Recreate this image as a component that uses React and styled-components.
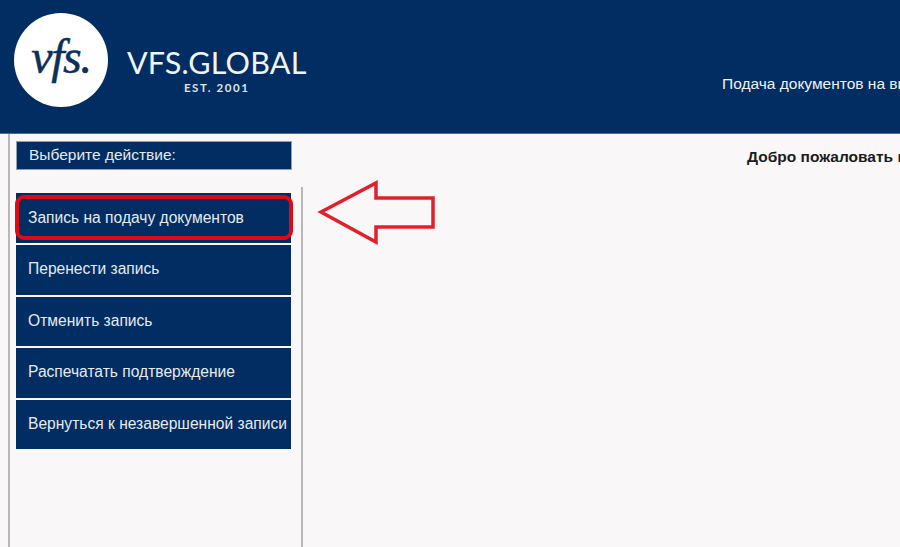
import React from 'react';
import styled, { createGlobalStyle } from 'styled-components';

const GlobalStyle = createGlobalStyle`
  html, body {
    margin: 0;
    padding: 0;
    height: 100%;
    overflow: hidden;
    background: #f9f7f8;
    font-family: "Liberation Sans", Arial, sans-serif;
  }
  #root {
    height: 100%;
  }
`;

const Page = styled.div`
  width: 900px;
  height: 547px;
  display: flex;
  flex-direction: column;
  overflow: hidden;
`;

const Header = styled.header`
  height: 133px;
  flex: none;
  display: flex;
  background: #012d62;
  border-bottom: 1px solid #5d6b7d;
  box-sizing: content-box;
`;

const Logo = styled.div`
  width: 722px;
  flex: none;
  display: flex;
  align-items: flex-start;
  padding: 13px 0 0 14px;
  box-sizing: border-box;
`;

const Circle = styled.div`
  width: 94px;
  height: 94px;
  border-radius: 50%;
  background: #fff;
  flex: none;
  display: flex;
  align-items: center;
  justify-content: center;
`;

const LogoMark = styled.span`
  font-family: "Liberation Serif", serif;
  font-style: italic;
  font-size: 48px;
  letter-spacing: -1.5px;
  line-height: 1;
  color: #0d2f5c;
  margin-top: -6px;
  -webkit-text-stroke: 0.5px #0d2f5c;
`;

const Wordmark = styled.div`
  margin: 33px 0 0 19px;
  display: flex;
  flex-direction: column;
  align-items: center;
  color: #f1f4f7;
`;

const BrandName = styled.div`
  font-family: Lato, sans-serif;
  font-size: 30.5px;
  font-weight: 400;
  line-height: 32px;
  letter-spacing: 0.2px;
  white-space: nowrap;
`;

const Established = styled.div`
  font-family: Lato, sans-serif;
  font-size: 11.5px;
  font-weight: 700;
  letter-spacing: 1.6px;
  line-height: 12px;
  margin-top: 4px;
  color: #dfe5ec;
`;

const Tagline = styled.div`
  padding-top: 75px;
  font-size: 15.5px;
  line-height: 18px;
  color: #eef1f5;
  white-space: nowrap;
`;

const Body = styled.div`
  flex: 1;
  display: flex;
  min-height: 0;
`;

const Sidebar = styled.aside`
  position: relative;
  width: 293px;
  flex: none;
  margin-left: 8px;
  padding: 7px 0 0 6px;
  box-sizing: border-box;
  border-left: 2px solid #b8b8b8;
`;

const SidebarTitle = styled.div`
  width: 276px;
  height: 29px;
  box-sizing: border-box;
  padding: 0 0 1px 12px;
  display: flex;
  align-items: center;
  background: #012d62;
  border: 1px solid #8fa0b4;
  font-size: 15.5px;
  color: #e6eaef;
`;

const Menu = styled.nav`
  width: 287px;
  margin-top: 17px;
  padding-top: 6px;
  display: flex;
  flex-direction: column;
  gap: 2px;
  border-right: 2px solid #b8b8b8;
  height: 360px;
  box-sizing: border-box;
`;

const MenuItem = styled.a`
  width: 275px;
  height: ${(p) => (p.$first ? 50 : 49.5)}px;
  flex: none;
  box-sizing: border-box;
  padding: 0 0 1px 12px;
  display: flex;
  align-items: center;
  background: #012d62;
  font-size: 15.6px;
  color: #e6eaef;
  white-space: nowrap;
`;

const Highlight = styled.div`
  position: absolute;
  left: 5px;
  top: 61px;
  width: 278px;
  height: 45px;
  box-sizing: border-box;
  border: 4px solid #e30613;
  border-radius: 9px;
`;

const Main = styled.main`
  flex: 1;
  min-width: 0;
  position: relative;
  padding: 14px 0 0 446px;
`;

const Welcome = styled.div`
  font-size: 15.5px;
  font-weight: 700;
  line-height: 18px;
  color: #1c1c1c;
  white-space: nowrap;
`;

const Arrow = styled.svg`
  position: absolute;
  left: 15px;
  top: 46px;
`;

const items = [
  'Запись на подачу документов',
  'Перенести запись',
  'Отменить запись',
  'Распечатать подтверждение',
  'Вернуться к незавершенной записи',
];

const App = () => {
  return (
    <Page>
      <GlobalStyle />
      <Header>
        <Logo>
          <Circle>
            <LogoMark>vfs.</LogoMark>
          </Circle>
          <Wordmark>
            <BrandName>VFS.GLOBAL</BrandName>
            <Established>EST. 2001</Established>
          </Wordmark>
        </Logo>
        <Tagline>Подача документов на визу</Tagline>
      </Header>
      <Body>
        <Sidebar>
          <SidebarTitle>Выберите действие:</SidebarTitle>
          <Menu>
            {items.map((text, i) => (
              <MenuItem key={text} $first={i === 0}>
                {text}
              </MenuItem>
            ))}
          </Menu>
          <Highlight />
        </Sidebar>
        <Main>
          <Welcome>Добро пожаловать в систему</Welcome>
          <Arrow width="120" height="66" viewBox="0 0 120 66" fill="none">
            <path
              d="M5 32 L60 3 L60 18 L117 18 L117 47 L60 47 L60 62 Z"
              stroke="#e2202c"
              strokeWidth="3.5"
              strokeLinejoin="miter"
            />
          </Arrow>
        </Main>
      </Body>
    </Page>
  );
};

export default App;
